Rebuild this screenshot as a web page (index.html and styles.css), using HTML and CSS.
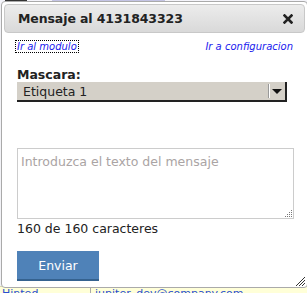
FILE: index.html
```html
<!DOCTYPE html>
<html>
<head>
<meta charset="utf-8">
<link rel="stylesheet" href="styles.css">
</head>
<body>
<div class="page">
  <div class="bg-top">
    <span class="bg-dark"></span>
    <span class="bg-lav"></span>
  </div>
  <div class="bg-mid"></div>
  <div class="bg-bottom">
    <span class="bg-cell bg-c1">Hinted</span>
    <span class="bg-cell bg-c2">jupiter_dev@company.com</span>
  </div>
</div>

<div class="dialog">
  <div class="titlebar">
    <span class="title">Mensaje al 4131843323</span>
    <svg class="close" width="10" height="10" viewBox="0 0 10 10">
      <path d="M1.5 1.5 L8.5 8.5 M8.5 1.5 L1.5 8.5" stroke="#222" stroke-width="2.6" stroke-linecap="square"/>
    </svg>
  </div>
  <div class="content">
    <div class="links">
      <a class="link focused">Ir al modulo</a>
      <a class="link">Ir a configuracion</a>
    </div>
    <div class="label">Mascara:</div>
    <div class="select">
      <span class="select-text">Etiqueta 1</span>
      <span class="select-btn"><span class="tri"></span></span>
    </div>
    <div class="textarea">
      <span class="placeholder">Introduzca el texto del mensaje</span>
      <svg class="grip" width="7" height="7" viewBox="0 0 7 7">
        <rect x="6" y="0" width="1" height="1" fill="#777"/>
        <rect x="4" y="2" width="1" height="1" fill="#777"/>
        <rect x="6" y="2" width="1" height="1" fill="#777"/>
        <rect x="2" y="4" width="1" height="1" fill="#777"/>
        <rect x="4" y="4" width="1" height="1" fill="#777"/>
        <rect x="6" y="4" width="1" height="1" fill="#777"/>
        <rect x="0" y="6" width="1" height="1" fill="#777"/>
        <rect x="2" y="6" width="1" height="1" fill="#777"/>
        <rect x="4" y="6" width="1" height="1" fill="#777"/>
        <rect x="6" y="6" width="1" height="1" fill="#777"/>
      </svg>
    </div>
    <div class="counter">160 de 160 caracteres</div>
    <div class="actions">
      <button class="btn">Enviar</button>
    </div>
  </div>
  <svg class="resize" width="10" height="10" viewBox="0 0 10 10">
    <path d="M1 10 L10 1 M4 10 L10 4 M7 10 L10 7" stroke="#333" stroke-width="1"/>
  </svg>
</div>
</body>
</html>
```
FILE: styles.css
```css
html, body {
  margin: 0;
  padding: 0;
}
body {
  width: 307px;
  height: 293px;
  overflow: hidden;
  font-family: "DejaVu Sans", Verdana, sans-serif;
  background: #fff;
  position: relative;
}
.page {
  display: flex;
  flex-direction: column;
  height: 293px;
}
.bg-top {
  height: 3px;
  display: flex;
  align-items: flex-start;
  background: #f4f4fa;
}
.bg-dark {
  margin-left: 5px;
  width: 22px;
  height: 2px;
  background: #333;
}
.bg-lav {
  margin-left: 25px;
  width: 113px;
  height: 2px;
  background: #c4c4e4;
}
.bg-mid {
  flex: 1;
  background: #f2f2f6;
}
.bg-bottom {
  height: 6px;
  background: #ffffd8;
  display: flex;
  overflow: hidden;
  border-top: 1px solid #d8d8b0;
}
.bg-cell {
  font-size: 11px;
  line-height: 11px;
  color: #2a4fd0;
  padding-top: 1px;
  white-space: nowrap;
}
.bg-c1 {
  width: 88px;
  padding-left: 2px;
  border-right: 1px solid #aaa;
}
.bg-c2 {
  padding-left: 4px;
}

.dialog {
  position: absolute;
  left: 1px;
  top: 1px;
  width: 301px;
  height: 281px;
  border: 1px solid #aaa;
  border-radius: 4px;
  background: #fff;
  padding: 2px;
  box-sizing: content-box;
}
.titlebar {
  height: 27px;
  border: 1px solid #c8c8c8;
  border-radius: 4px;
  background: linear-gradient(#ececec, #d9d9d9);
  display: flex;
  align-items: center;
  justify-content: space-between;
  padding: 0 11px 0 13px;
}
.title {
  font-weight: bold;
  font-size: 12.5px;
  color: #222;
  letter-spacing: -0.1px;
}
.close {
  display: block;
}
.content {
  padding: 7px 12px 0 13px;
  display: flex;
  flex-direction: column;
}
.links {
  display: flex;
  justify-content: space-between;
  align-items: center;
  height: 13px;
}
.link {
  font-size: 10px;
  font-style: italic;
  color: #1a1aee;
  line-height: 11px;
}
.focused {
  outline: 1px dotted #000;
  padding: 0 1px;
  margin-left: -1px;
}
.label {
  margin-top: 14px;
  font-weight: bold;
  font-size: 12.5px;
  color: #222;
  line-height: 15px;
}
.select {
  width: 270px;
  height: 20px;
  box-sizing: border-box;
  background: #d4d0c8;
  border-right: 2px solid #222;
  border-bottom: 2px solid #222;
  display: flex;
  align-items: center;
  justify-content: space-between;
}
.select-text {
  font-size: 12.5px;
  color: #222;
  padding-left: 6px;
}
.select-btn {
  width: 14px;
  height: 14px;
  border-left: 1px solid #fff;
  box-shadow: -1px 0 0 #999;
  display: flex;
  align-items: center;
  justify-content: center;
  margin-right: 1px;
}
.tri {
  width: 0;
  height: 0;
  border-left: 5px solid transparent;
  border-right: 5px solid transparent;
  border-top: 5px solid #111;
}
.textarea {
  margin-top: 46px;
  width: 277px;
  height: 71px;
  box-sizing: border-box;
  border: 1px solid #cccccc;
  position: relative;
  padding: 2px 3px;
}
.placeholder {
  font-size: 12.5px;
  color: #aaa4a4;
}
.grip {
  position: absolute;
  right: 1px;
  bottom: 1px;
}
.counter {
  margin-top: 2px;
  font-size: 12.5px;
  color: #222;
  line-height: 16px;
}
.actions {
  margin-top: 14px;
}
.btn {
  width: 82px;
  height: 30px;
  border: 0;
  border-bottom: 2px solid #35628f;
  background: #4f82b8;
  color: #fff;
  font-family: "DejaVu Sans", Verdana, sans-serif;
  font-size: 12.5px;
  padding: 0;
  margin: 0;
}
.resize {
  position: absolute;
  right: 2px;
  bottom: 1px;
}
```
